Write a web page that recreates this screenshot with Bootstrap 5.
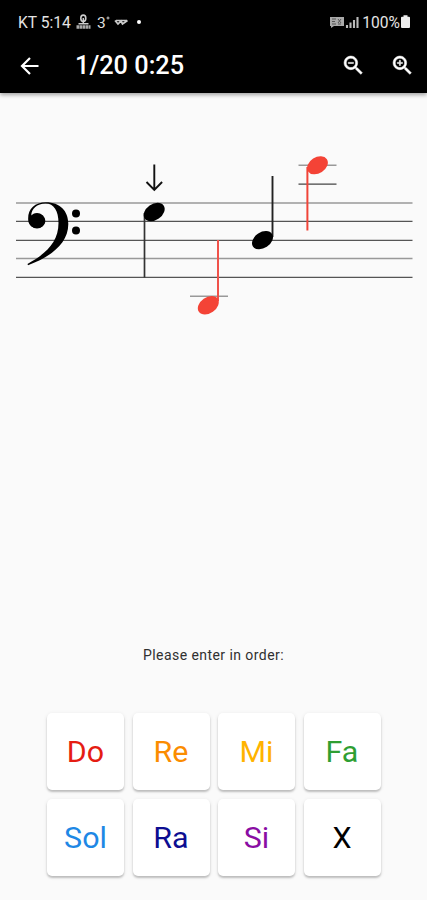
<!DOCTYPE html>
<html lang="en">
<head>
<meta charset="utf-8">
<meta name="viewport" content="width=device-width, initial-scale=1">
<title>Note reading</title>
<link href="https://cdn.jsdelivr.net/npm/bootstrap@5.3.0/dist/css/bootstrap.min.css" rel="stylesheet">
<style>
body{font-family:Roboto,sans-serif;background:#fafafa;height:900px;overflow:hidden}
.top-area{height:93px;background:#000;color:#fff;box-shadow:0 2px 4px rgba(0,0,0,.35);z-index:1}
.status-bar{height:37px;padding:8px 16px 0 18px;font-size:15.6px;line-height:30px;color:#e4e4e4}
.status-bar svg{flex:none}
.clock{width:54px;white-space:nowrap}
.app-bar{height:56px;padding:1px 12px 0 18px}
.app-title{font-size:25.3px;font-weight:500;line-height:55px;margin-left:33px}
.icon-btn{border:0;background:none;padding:0;line-height:0;color:#fff}
.score{height:247px}
.prompt{font-size:14px;letter-spacing:.44px;line-height:20px;color:#303030;margin-top:304.5px}
.keys{width:334px;grid-template-columns:repeat(4,77px);gap:8.5px;margin-top:48.5px;margin-left:47px}
.key{height:77px;border:0;border-radius:5px;font-size:30.4px;line-height:77px;padding:0;background:#fff;box-shadow:0 2px 2px rgba(0,0,0,.2),0 1px 4px rgba(0,0,0,.09)}
.c-do{color:#e51c13}.c-re{color:#fb8c00}.c-mi{color:#ffb300}.c-fa{color:#2e9e32}
.c-sol{color:#1e88e5}.c-ra{color:#0d0d91}.c-si{color:#8a0da3}.c-x{color:#000}
</style>
</head>
<body class="d-flex flex-column">
<header class="top-area position-relative">
  <div class="status-bar d-flex">
    <span class="clock">KT 5:14</span>
    <svg width="70" height="29" viewBox="72 8 70 29" fill="none" stroke="#ccc">
      <ellipse cx="83.3" cy="18.3" rx="2.5" ry="3.2" stroke-width="1.6"/>
      <path d="M83.3 18v6M78.500 23.800h10" stroke-width="1.5"/>
      <path d="M76.500 27h14" stroke-width="3.600" stroke-dasharray="2.600 .4" stroke="#aaa"/>
      <path d="M115 20.500l3 3.500 3-3 1.500 3 5-3.500M116 20.500h11" stroke-width="1.700"/>
      <circle cx="139" cy="22" r="2" fill="#fff" stroke="none"/>
      <text x="97" y="27.500" font-size="15.500" fill="#ddd" stroke="none">3</text>
      <circle cx="108" cy="18" r="1" stroke-width="1"/>
    </svg>
    <span class="ms-auto d-flex">
      <svg width="33" height="29" viewBox="328 8 33 29">
        <path d="M329 17h14v9h-10l-3 2v-2h-1z" fill="#aaa"/>
        <path d="M331 19h4M331 21.500h3M331 24h4M337 19l3 4M340 19l-3 4M337 24h3" stroke="#555" stroke-width="1"/>
        <path d="M346 28v-3M349.500 28v-5.500M353 28v-8M356.500 28V17" stroke="#bbb" stroke-width="2.100"/>
      </svg>
      <span class="pct">100%</span>
      <svg width="11" height="29" viewBox="400 8 11 29"><path d="M403.500 15.300h4v1.500h1.500q1 0 1 1V27q0 1-1 1h-7q-1 0-1-1v-9.200q0-1 1-1h1.500z" fill="#eee"/></svg>
    </span>
  </div>
  <nav class="app-bar d-flex align-items-center">
    <button class="icon-btn" aria-label="Back"><svg width="24" height="24" viewBox="0 0 24 24" fill="none" stroke="currentColor" stroke-width="2.2"><path d="M20.500 12H5M12 4l-8 8 8 8"/></svg></button>
    <span class="app-title">1/20 0:25</span>
    <button class="icon-btn ms-auto" aria-label="Zoom out"><svg width="25" height="25" viewBox="0 0 24 24" fill="currentColor"><path d="M15.500 14h-.8l-.3-.3A6.500 6.500 0 1 0 13.700 14.400l.3.3v.8l5 5 1.500-1.500zM9.500 14A4.500 4.500 0 1 1 9.500 5a4.500 4.500 0 0 1 0 9zM7 9h5v1H7z" stroke="currentColor" stroke-width=".5"/></svg></button>
    <button class="icon-btn" aria-label="Zoom in"><svg class="ms-4" width="25" height="25" viewBox="0 0 24 24" fill="currentColor"><path d="M15.500 14h-.8l-.3-.3A6.500 6.500 0 1 0 13.700 14.400l.3.3v.8l5 5 1.500-1.500zM9.500 14A4.500 4.500 0 1 1 9.500 5a4.500 4.500 0 0 1 0 9zM9 7h1v2h2v1h-2v2H9v-2H7V9h2z" stroke="currentColor" stroke-width=".5"/></svg></button>
  </nav>
</header>
<main>
  <svg class="score d-block w-100" viewBox="0 93 427 247" fill="none">
    <g stroke-width="1.3">
      <path d="M16 203H412.500M16 258.500H412.500" stroke="#999" stroke-width="1.7"/>
      <path d="M16 221.300H412.500M16 240.300H412.500M16 277.300H412.500" stroke="#555"/>
      <path d="M190 296.300H228M298.500 165.200H336.500" stroke="#999" stroke-width="1.5"/>
      <path d="M298.500 184.200H336.500" stroke="#444"/>
    </g>
    <path d="M28.300 221C27 210 34 202.300 46 202.300C60 202.300 68.300 211 68.300 224C68.300 244 50 257 28 265.300L27.500 264C45 254 58.500 243 58.500 223C58.500 211 54 203.600 45.500 203.600C37 203.600 31 209 31.300 216C33 214.300 35 213.700 37.500 213.700C42 213.700 45.300 217 45.300 221C45.300 225.200 41.500 228 37 228C32 228 29 225 28.300 221Z" fill="#000"/>
    <circle cx="37" cy="220.800" r="7.800" fill="#000"/>
    <circle cx="76" cy="213.500" r="4" fill="#000"/><circle cx="76" cy="230.500" r="4" fill="#000"/>
    <path d="M154.300 164.500V190M146.500 182l7.800 8 7.800-8" stroke="#111" stroke-width="1.900"/>
    <path d="M144.500 213V277.500" stroke="#333" stroke-width="1.700"/>
    <path d="M218 240V301" stroke="#f0524a" stroke-width="2"/>
    <path d="M272.500 176V237" stroke="#222" stroke-width="1.900"/>
    <path d="M307.400 167V230.500" stroke="#f04438" stroke-width="2"/>
    <g>
      <ellipse cx="154.200" cy="212" rx="11.500" ry="8" transform="rotate(-35 154.200 212)" fill="#000"/>
      <ellipse cx="208.300" cy="305.200" rx="11.500" ry="8" transform="rotate(-35 208.300 305.200)" fill="#f44336"/>
      <ellipse cx="262.500" cy="240.200" rx="11.400" ry="7.900" transform="rotate(-33 262.500 240.200)" fill="#000"/>
      <ellipse cx="317.500" cy="165.300" rx="11.200" ry="8" transform="rotate(-33 317.500 165.300)" fill="#f44336"/>
    </g>
  </svg>
  <p class="prompt text-center mb-0">Please enter in order:</p>
  <div class="keys d-grid">
    <button class="key c-do">Do</button><button class="key c-re">Re</button><button class="key c-mi">Mi</button><button class="key c-fa">Fa</button>
    <button class="key c-sol">Sol</button><button class="key c-ra">Ra</button><button class="key c-si">Si</button><button class="key c-x">X</button>
  </div>
</main>
<script src="https://cdn.jsdelivr.net/npm/bootstrap@5.3.0/dist/js/bootstrap.bundle.min.js"></script>
</body>
</html>
